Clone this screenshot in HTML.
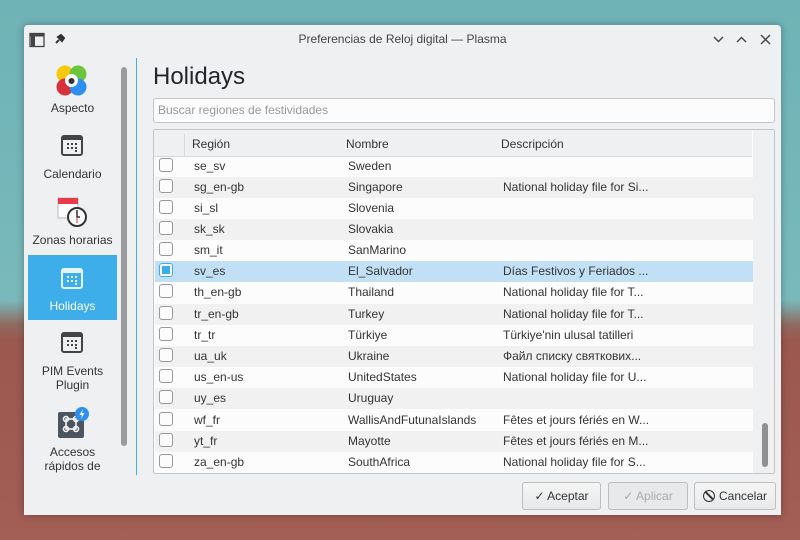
<!DOCTYPE html>
<html><head><meta charset="utf-8"><style>
*{box-sizing:border-box;margin:0;padding:0}
body{width:800px;height:540px;overflow:hidden;position:relative;font-family:"Liberation Sans","DejaVu Sans",sans-serif;font-size:12px;color:#232629;
background:linear-gradient(180deg,#6fb3b6 0,#79b9bb 300px,#8f6a60 325px,#9b584f 340px,#a35e55 540px)}
.win{position:absolute;left:24px;top:25px;width:757px;height:490px;background:#eff0f1;border-radius:4px 4px 0 0;box-shadow:0 0 8px rgba(0,0,0,.3)}
.a{position:absolute}
.title{left:0;width:757px;top:7px;text-align:center;font-size:12px;color:#444}
.side .it{position:absolute;left:4px;width:89px;text-align:center;font-size:12px;color:#333;line-height:14px}
.row{position:absolute;left:1px;width:598px;height:21px;line-height:21px;font-size:12px;color:#333}
.row span{position:absolute}
.cb{position:absolute;left:4px;top:2px;width:14px;height:14px;border:1px solid #999;border-radius:3px;background:#fcfcfc}
.btn{position:absolute;top:457px;height:28px;border:1px solid #bcbebf;border-radius:3px;background:linear-gradient(#f5f5f6,#e8e9ea);font-size:12px;line-height:26px;color:#333;text-align:center}
</style></head><body>
<div class="win">
 <svg class="a" style="left:5px;top:7px" width="16" height="16"><rect x="1" y="1.5" width="14" height="13" fill="none" stroke="#444" stroke-width="1.3"/><rect x="1" y="1.5" width="14" height="3" fill="#444"/><rect x="2" y="4" width="4" height="10" fill="#444"/></svg>
 <svg class="a" style="left:29px;top:7px" width="14" height="14"><path d="M3 11 L6 8 M5 5 L9 9 L11 6 L8 3 Z" stroke="#333" stroke-width="2" fill="#333"/></svg>
 <div class="a title">Preferencias de Reloj digital — Plasma</div>
 <svg class="a" style="left:688px;top:8px" width="60" height="14" fill="none" stroke="#444" stroke-width="1.4"><path d="M2 4 L6.5 8.5 L11 4"/><path d="M25 9 L29.5 4.5 L34 9"/><path d="M49 2 L58 11 M58 2 L49 11"/></svg>
 <div class="side">
  <svg class="a" style="left:31px;top:39px" width="34" height="34"><circle cx="10" cy="10" r="8.5" fill="#f6c90e"/><circle cx="23" cy="10" r="8.5" fill="#6cc43c"/><circle cx="10" cy="23" r="8.5" fill="#d8333a"/><circle cx="23" cy="23" r="8.5" fill="#2d8ff0"/><circle cx="16.5" cy="16.5" r="6.5" fill="#fff"/><circle cx="16.5" cy="17" r="3" fill="#333"/></svg>
  <div class="it" style="top:76px">Aspecto</div>
  <svg class="a" style="left:36px;top:108px" width="24" height="24"><rect x="2" y="3" width="20" height="19" rx="2" fill="none" stroke="#444" stroke-width="2"/><rect x="2" y="3" width="20" height="4" fill="#444"/><g fill="#444"><rect x="7" y="10" width="2" height="2"/><rect x="11" y="10" width="2" height="2"/><rect x="15" y="10" width="2" height="2"/><rect x="7" y="14" width="2" height="2"/><rect x="11" y="14" width="2" height="2"/><rect x="15" y="14" width="2" height="2"/><rect x="15" y="17" width="2" height="2"/></g></svg>
  <div class="it" style="top:142px">Calendario</div>
  <svg class="a" style="left:33px;top:172px" width="32" height="32"><rect x="1" y="1" width="20" height="20" fill="#fcfcfc" stroke="#bbb"/><rect x="1" y="1" width="20" height="6" fill="#e93a4a"/><circle cx="20" cy="20" r="9" fill="#fcfcfc" stroke="#333" stroke-width="2"/><path d="M20 13 V20 H23" stroke="#333" stroke-width="1.5" fill="none"/><path d="M20 20 V26" stroke="#d33" stroke-width="1"/></svg>
  <div class="it" style="top:208px">Zonas horarias</div>
  <div class="a" style="left:4px;top:230px;width:89px;height:65px;background:#3daee9"></div>
  <svg class="a" style="left:36px;top:241px" width="24" height="24"><rect x="2" y="3" width="20" height="19" rx="2" fill="none" stroke="#e6f4fc" stroke-width="2"/><rect x="2" y="3" width="20" height="4" fill="#e6f4fc"/><g fill="#e6f4fc"><rect x="7" y="10" width="2" height="2"/><rect x="11" y="10" width="2" height="2"/><rect x="15" y="10" width="2" height="2"/><rect x="7" y="14" width="2" height="2"/><rect x="11" y="14" width="2" height="2"/><rect x="15" y="14" width="2" height="2"/><rect x="15" y="17" width="2" height="2"/></g></svg>
  <div class="it" style="top:274px;color:#fff">Holidays</div>
  <svg class="a" style="left:36px;top:305px" width="24" height="24"><rect x="2" y="3" width="20" height="19" rx="2" fill="none" stroke="#444" stroke-width="2"/><rect x="2" y="3" width="20" height="4" fill="#444"/><g fill="#444"><rect x="7" y="10" width="2" height="2"/><rect x="11" y="10" width="2" height="2"/><rect x="15" y="10" width="2" height="2"/><rect x="7" y="14" width="2" height="2"/><rect x="11" y="14" width="2" height="2"/><rect x="15" y="14" width="2" height="2"/><rect x="15" y="17" width="2" height="2"/></g></svg>
  <div class="it" style="top:339px">PIM Events<br>Plugin</div>
  <svg class="a" style="left:33px;top:382px" width="32" height="32"><rect x="1" y="5" width="26" height="26" rx="2" fill="#4d5561"/><path d="M9 12 H19 V22 H9 Z" fill="none" stroke="#fff" stroke-width="1.5"/><circle cx="9" cy="12" r="2.5" fill="none" stroke="#fff" stroke-width="1.5"/><circle cx="19" cy="12" r="2.5" fill="none" stroke="#fff" stroke-width="1.5"/><circle cx="9" cy="22" r="2.5" fill="none" stroke="#fff" stroke-width="1.5"/><circle cx="19" cy="22" r="2.5" fill="none" stroke="#fff" stroke-width="1.5"/><circle cx="25" cy="7" r="7" fill="#2d8ff0"/><path d="M26 2 L22.5 8 H25 L24 12 L27.5 6 H25 Z" fill="#fff"/></svg>
  <div class="it" style="top:420px">Accesos<br>rápidos de</div>
  <div class="a" style="left:97px;top:42px;width:6px;height:379px;background:#9a9c9e;border-radius:3px"></div>
 </div>
 <div class="a" style="left:112px;top:33px;width:1px;height:417px;background:#3daee9"></div>
 <div class="a" style="left:129px;top:38px;font-size:24px;color:#232629">Holidays</div>
 <div class="a" style="left:129px;top:73px;width:622px;height:25px;background:#fcfcfc;border:1px solid #c4c6c7;border-radius:3px;padding-left:4px;line-height:23px;color:#999;font-size:12px">Buscar regiones de festividades</div>
 <div class="a" style="left:129px;top:104px;width:622px;height:345px;background:#fcfcfc;border:1px solid #c4c6c7;border-radius:2px;overflow:hidden">
  <div id="rows">
  <div class="row" style="top:26px;background:#fcfcfc"><div class="cb"></div><span style="left:39px">se_sv</span><span style="left:193px">Sweden</span></div>
  <div class="row" style="top:47px;background:#f1f1f2"><div class="cb"></div><span style="left:39px">sg_en-gb</span><span style="left:193px">Singapore</span><span style="left:348px">National holiday file for Si...</span></div>
  <div class="row" style="top:68px;background:#fcfcfc"><div class="cb"></div><span style="left:39px">si_sl</span><span style="left:193px">Slovenia</span></div>
  <div class="row" style="top:89px;background:#f1f1f2"><div class="cb"></div><span style="left:39px">sk_sk</span><span style="left:193px">Slovakia</span></div>
  <div class="row" style="top:110px;background:#fcfcfc"><div class="cb"></div><span style="left:39px">sm_it</span><span style="left:193px">SanMarino</span></div>
  <div class="row" style="top:131px;background:#c2e0f5"><div class="cb" style="border-color:#3daee9;background:#fcfcfc"><div style="position:absolute;left:2px;top:2px;width:8px;height:8px;background:#3daee9"></div></div><span style="left:39px">sv_es</span><span style="left:193px">El_Salvador</span><span style="left:348px">Días Festivos y Feriados ...</span></div>
  <div class="row" style="top:152px;background:#fcfcfc"><div class="cb"></div><span style="left:39px">th_en-gb</span><span style="left:193px">Thailand</span><span style="left:348px">National holiday file for T...</span></div>
  <div class="row" style="top:174px;background:#f1f1f2"><div class="cb"></div><span style="left:39px">tr_en-gb</span><span style="left:193px">Turkey</span><span style="left:348px">National holiday file for T...</span></div>
  <div class="row" style="top:195px;background:#fcfcfc"><div class="cb"></div><span style="left:39px">tr_tr</span><span style="left:193px">Türkiye</span><span style="left:348px">Türkiye'nin ulusal tatilleri</span></div>
  <div class="row" style="top:216px;background:#f1f1f2"><div class="cb"></div><span style="left:39px">ua_uk</span><span style="left:193px">Ukraine</span><span style="left:348px">Файл списку святкових...</span></div>
  <div class="row" style="top:237px;background:#fcfcfc"><div class="cb"></div><span style="left:39px">us_en-us</span><span style="left:193px">UnitedStates</span><span style="left:348px">National holiday file for U...</span></div>
  <div class="row" style="top:258px;background:#f1f1f2"><div class="cb"></div><span style="left:39px">uy_es</span><span style="left:193px">Uruguay</span></div>
  <div class="row" style="top:280px;background:#fcfcfc"><div class="cb"></div><span style="left:39px">wf_fr</span><span style="left:193px">WallisAndFutunaIslands</span><span style="left:348px">Fêtes et jours fériés en W...</span></div>
  <div class="row" style="top:301px;background:#f1f1f2"><div class="cb"></div><span style="left:39px">yt_fr</span><span style="left:193px">Mayotte</span><span style="left:348px">Fêtes et jours fériés en M...</span></div>
  <div class="row" style="top:322px;background:#fcfcfc"><div class="cb"></div><span style="left:39px">za_en-gb</span><span style="left:193px">SouthAfrica</span><span style="left:348px">National holiday file for S...</span></div>
  </div>
  <div class="a" style="left:0;top:0;width:598px;height:27px;background:#eff0f1;border-bottom:1px solid #d8d9da;color:#333">
   <div class="a" style="left:30px;top:4px;width:1px;height:22px;background:#d8d9da"></div>
   <span class="a" style="left:38px;top:7px">Región</span><span class="a" style="left:192px;top:7px">Nombre</span><span class="a" style="left:347px;top:7px">Descripción</span>
  </div>
  <div class="a" style="left:599px;top:0;width:22px;height:345px;background:#eff0f1"></div>
  <div class="a" style="left:608px;top:293px;width:6px;height:44px;background:#8e9092;border-radius:3px"></div>
 </div>
 <div class="btn" style="left:498px;width:79px">✓ Aceptar</div>
 <div class="btn" style="left:584px;width:80px;color:#a8aaab;background:#e8e9ea">✓ Aplicar</div>
 <div class="btn" style="left:670px;width:82px"><span style="display:inline-block;width:12px;height:12px;border:1.5px solid #333;border-radius:50%;vertical-align:-2px;position:relative;margin-right:4px"><span style="position:absolute;left:4px;top:-1px;width:1.5px;height:11px;background:#333;transform:rotate(-45deg)"></span></span>Cancelar</div>
</div>
</body></html>
